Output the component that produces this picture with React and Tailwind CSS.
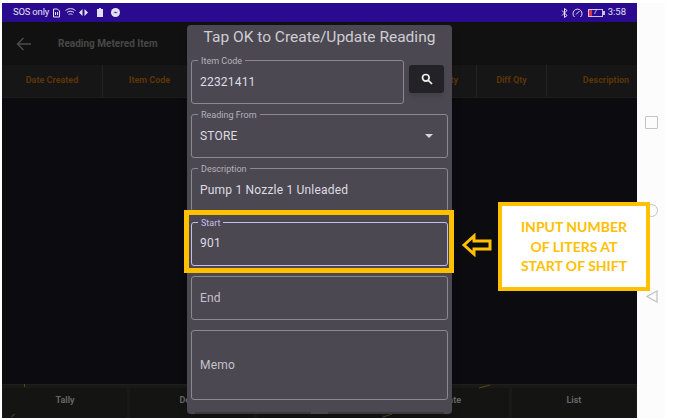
const COLUMNS = [
  { label: "Date Created", width: "w-[101px]" },
  { label: "Item Code", width: "w-[94px]" },
  { label: "", width: "w-[94px]" },
  { label: "", width: "w-[100px]" },
  { label: "Reading Qty", width: "w-[86px]" },
  { label: "Diff Qty", width: "w-[70px]" },
  { label: "Description", width: "flex-1 pl-[28px]" },
];

const ACTIONS = ["Tally", "Delete", "Count", "Update", "List"];

const StatusLeft = () => (
  <div className="flex items-center gap-[3px] text-[9.5px] text-[#e4e0f4]">
    <span className="tracking-[-0.2px]">SOS only</span>
    <svg width="9" height="10" viewBox="0 0 9 10" fill="none" stroke="#e4e0f4">
      <path d="M1.5 1h4l2 2v6h-6z" />
      <path d="M3.5 4v3M5.5 4v3" />
    </svg>
    <svg width="11" height="9" viewBox="0 0 11 9" fill="none" stroke="#e4e0f4" className="ml-[1px]">
      <path d="M.5 2.5c3-2.5 7-2.5 10 0M2 4.5c2-1.7 5-1.7 7 0M3.5 6.5c1-.8 3-.8 4 0" />
    </svg>
    <svg width="9" height="7" viewBox="0 0 9 7" fill="#e4e0f4">
      <path d="M3.5 0v7L0 3.5zM5.5 0v7L9 3.5z" />
    </svg>
    <svg width="6" height="9" viewBox="0 0 6 9" fill="#e4e0f4" className="ml-[6px]">
      <path d="M2 0h2v1h2v8H0V1h2z" />
    </svg>
    <svg width="9" height="9" viewBox="0 0 9 9" className="ml-[5px]">
      <circle cx="4.5" cy="4.5" r="4.5" fill="#e4e0f4" />
      <path d="M2 5.5l2-2 1.2 1L7 3.5 5 5.6 3.800 4.600z" fill="#2a0b90" />
    </svg>
  </div>
);

const StatusRight = () => (
  <div className="flex items-center gap-[3px] text-[9.5px] text-[#e4e0f4]">
    <svg width="7" height="10" viewBox="0 0 7 10" fill="none" stroke="#e4e0f4">
      <path d="M1 2.500l5 5-2.500 2V.500l2.500 2-5 5" />
    </svg>
    <svg width="11" height="10" viewBox="0 0 11 10" fill="none" stroke="#e4e0f4" className="ml-[1px]">
      <path d="M2.500 9a4.500 4.500 0 1 1 6 0" />
      <path d="M4 6.500L7.500 3" />
    </svg>
    <div className="relative ml-[2px] mr-[2px] flex h-[8px] w-[15px] items-center justify-center border border-[#c9c4e4] text-[7px] leading-none">
      <span className="absolute bottom-0 left-0 top-0 w-[3px] bg-[#d8344a]" />
      <span>7</span>
      <span className="absolute -right-[3px] top-[1px] h-[4px] w-[2px] bg-[#c9c4e4]" />
    </div>
    <span>3:58</span>
  </div>
);

const Field = ({ label, value, muted, focused, height, className = "", children }) => (
  <div
    className={`relative flex items-center rounded-[3px] border px-[8px] text-[12px] ${
      focused ? "border-[#c8bcec] pb-[2px]" : "border-[#8b8892]"
    } ${muted ? "text-[#c4c2c8]" : "text-[#dedce2]"} ${height} ${className}`}
  >
    {label && (
      <span
        className={`absolute -top-[5px] left-[6px] bg-[#4b4852] px-[3px] text-[9px] leading-[10px] ${
          focused ? "text-[#c8bcec]" : "text-[#b4b2b9]"
        }`}
      >
        {label}
      </span>
    )}
    <span className="tracking-[0.2px]">{value}</span>
    {children}
  </div>
);

const ReadingDialog = () => (
  <div className="absolute left-[187px] top-[25px] flex h-[389px] w-[265px] flex-col rounded-[4px] bg-[#4b4852] px-[4px] shadow-lg">
    <h2 className="mb-[13px] mt-[2px] text-center text-[15.500px] leading-[20px] text-[#cfcdd3]">
      Tap OK to Create/Update Reading
    </h2>
    <div className="flex flex-col gap-[10px]">
      <div className="flex items-center gap-[5px]">
        <Field label="Item Code" value="22321411" height="h-[44px]" className="w-[213px]" />
        <button className="mb-[6px] flex h-[28px] w-[35px] items-center justify-center rounded-[3px] bg-[#232226] shadow-md">
          <svg width="12" height="12" viewBox="0 0 12 12" fill="none" stroke="#f2f2f2" strokeWidth="1.700">
            <circle cx="4.800" cy="4.800" r="3.300" />
            <path d="M7.300 7.300L11 11" />
          </svg>
        </button>
      </div>
      <Field label="Reading From" value="STORE" height="h-[44px]" className="w-[257px] justify-between">
        <span className="mr-[6px] h-0 w-0 border-x-[4px] border-t-[4px] border-x-transparent border-t-[#d8d6dc]" />
      </Field>
      <Field label="Description" value="Pump 1 Nozzle 1 Unleaded" height="h-[44px]" className="w-[257px]" />
      <Field label="Start" value="901" focused height="h-[44px]" className="w-[257px] border-[1.500px]" />
      <Field value="End" muted height="h-[44px]" className="w-[257px]" />
      <Field value="Memo" muted height="h-[70px]" className="w-[257px]" />
    </div>
    <div className="mt-auto flex gap-[17px] pl-[4px]">
      <span className="h-[2px] w-[116px] bg-[#3a3840]" />
      <span className="h-[2px] w-[116px] bg-[#3a3840]" />
    </div>
  </div>
);

const Callout = () => (
  <>
    <div className="absolute left-[184px] top-[210px] h-[63px] w-[270px] border-[5px] border-[#ffc000]" />
    <svg width="31" height="24" viewBox="0 0 31 24" className="absolute left-[461px] top-[233px]" fill="none" stroke="#ffc000" strokeWidth="3">
      <path d="M3 12L13 3v5h16v8H13v5z" />
    </svg>
    <div className="absolute left-[498px] top-[202px] flex h-[89px] w-[152px] items-center justify-center border-[4px] border-[#ffc000] bg-white text-center font-['Lato',sans-serif] text-[14px] font-bold leading-[19.500px] text-[#ffc000]">
      <p>
        INPUT NUMBER
        <br />
        OF LITERS AT
        <br />
        START OF SHIFT
      </p>
    </div>
  </>
);

export default function App() {
  return (
    <div className="relative flex h-[418px] w-[678px] overflow-hidden bg-white pl-[2px] pt-[3px] font-['Roboto',sans-serif]">
      <div className="flex h-[415px] w-[635px] flex-col bg-[#0c0b10]">
        <div className="flex h-[19px] items-center justify-between bg-[#2a0b90] pl-[11px] pr-[11px]">
          <StatusLeft />
          <StatusRight />
        </div>
        <div className="flex h-[43px] items-center bg-[#111111] pl-[14px]">
          <svg width="15" height="14" viewBox="0 0 15 14" fill="none" stroke="#4c4c4c" strokeWidth="1.400">
            <path d="M15 7H1.500M7.500 1L1.500 7l6 6" />
          </svg>
          <span className="ml-[27px] text-[10px] font-bold text-[#484848]">Reading Metered Item</span>
        </div>
        <div className="flex h-[33px] border-b border-[#1c1c1c] bg-[#161616]">
          {COLUMNS.map((col, i) => (
            <div
              key={i}
              className={`flex items-center justify-center border-r border-[#222222] text-[9px] font-bold text-[#5c3506] last:border-r-0 ${col.width}`}
            >
              {col.label}
            </div>
          ))}
        </div>
        <div className="flex-1" />
        <div className="relative flex h-[34px] gap-[3px] border-t border-[#1e1e1c] bg-[#191917] px-[1px] pt-[3px]">
          {ACTIONS.map((name) => (
            <div
              key={name}
              className="flex flex-1 items-center justify-center rounded-[2px] bg-[#141412] pb-[4px] text-[9px] font-bold text-[#666666]"
            >
              {name}
            </div>
          ))}
          <svg width="635" height="34" viewBox="0 0 635 34" fill="none" stroke="#5a4718" className="absolute -top-[1px] left-0">
            <path d="M22.500 0v3M9 33l4-3M477 4l11-3M381 33l9-3" />
          </svg>
        </div>
      </div>

      <div className="flex w-[28px] flex-col items-center bg-[#fcfcfc] pl-[1px] pt-[113px]">
        <span className="h-[13px] w-[13px] rounded-[1px] border-[1.500px] border-[#c4c4c4]" />
        <span className="mt-[75px] h-[13px] w-[13px] rounded-full border-[1.500px] border-[#c4c4c4]" />
        <svg width="12" height="13" viewBox="0 0 12 13" fill="none" stroke="#c4c4c4" strokeWidth="1.300" className="mt-[73px]">
          <path d="M11 1v11L1 6.500z" />
        </svg>
      </div>

      <ReadingDialog />
      <Callout />
    </div>
  );
}
